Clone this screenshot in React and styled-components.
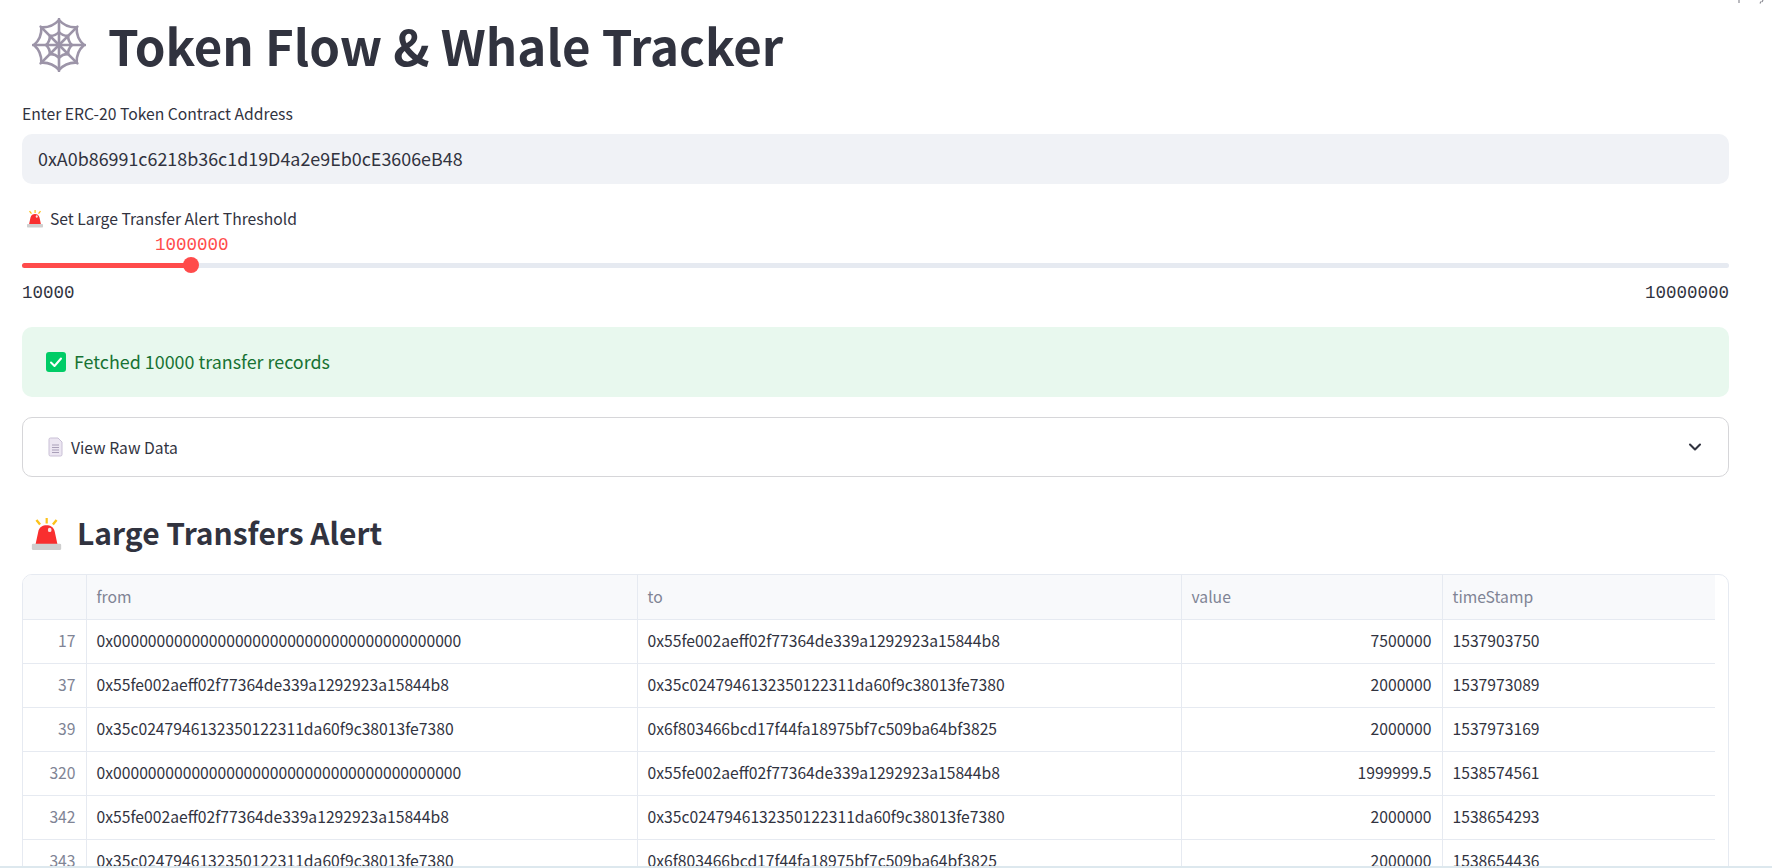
import React from 'react'
import styled, { createGlobalStyle } from 'styled-components'
import { ChevronDown } from 'lucide-react'

const GlobalStyle = createGlobalStyle`
  html, body {
    margin: 0;
    padding: 0;
    height: 868px;
    overflow: hidden;
    background: #fff;
  }
  body {
    font-family: "Noto Sans CJK SC", "Noto Sans", sans-serif;
    color: #31333f;
  }
`

const Page = styled.main`
  position: relative;
  height: 868px;
  overflow: hidden;
  padding: 0 43px 0 22px;
  box-sizing: border-box;
  display: flex;
  flex-direction: column;
  border-bottom: 2px solid #dde8ee;

  & > * {
    flex: none;
  }
`

// bottom edge of the toolbar text that hangs in from above the window
const ClippedToolbar = styled.svg`
  position: absolute;
  top: 0;
  right: 0;
`

const Title = styled.h1`
  display: flex;
  align-items: center;
  gap: 22px;
  margin: 12px 0 0 10px;
  height: 66px;
  font-size: 49.200px;
  font-weight: 700;
  line-height: 66px;
  white-space: nowrap;
`

const FieldLabel = styled.label`
  display: flex;
  align-items: center;
  gap: 6px;
  font-size: 15.700px;
  line-height: 24px;
  height: 24px;
  margin-top: ${props => props.$top || 0}px;
  padding-left: ${props => props.$indent || 0}px;
`

const TokenInput = styled.div`
  height: 50px;
  margin-top: 8px;
  padding: 0 16px 2px;
  box-sizing: border-box;
  display: flex;
  align-items: center;
  background: #f0f2f6;
  border-radius: 10px;
  font-size: 17.900px;
`

const SliderBlock = styled.section`
  margin-top: 23px;
`

const SliderValue = styled.div`
  margin-top: 2px;
  padding-left: 133px;
  font-family: "Liberation Mono", monospace;
  font-size: 17.500px;
  line-height: 24px;
  color: #ff4b4b;
`

const Track = styled.div`
  position: relative;
  height: 5px;
  margin-top: 6px;
  background: #e6eaf1;
  border-radius: 3px;
`

const TrackFill = styled.div`
  height: 100%;
  background: #ff4b4b;
  border-radius: 3px;
`

const Thumb = styled.div`
  position: absolute;
  top: -6px;
  width: 16px;
  height: 16px;
  margin-left: -8px;
  background: #ff4b4b;
  border-radius: 50%;
`

const SliderRange = styled.div`
  display: flex;
  justify-content: space-between;
  margin-top: 13px;
  font-family: "Liberation Mono", monospace;
  font-size: 17.500px;
  line-height: 24px;
`

const SuccessBox = styled.div`
  height: 70px;
  margin-top: 22px;
  padding: 0 24px 2px;
  box-sizing: border-box;
  display: flex;
  align-items: center;
  gap: 8px;
  background: #e8f8ee;
  border-radius: 10px;
  color: #177233;
  font-size: 17.900px;
`

const CheckMark = styled.span`
  width: 20px;
  height: 20px;
  margin-top: 1px;
  display: flex;
  align-items: center;
  justify-content: center;
  background: #00cc66;
  border-radius: 3px;
`

const Expander = styled.div`
  height: 60px;
  margin-top: 20px;
  box-sizing: border-box;
  padding: 0 23px 0 25px;
  display: flex;
  align-items: center;
  gap: 8px;
  border: 1px solid #d6d6d9;
  border-radius: 10px;
  font-size: 15.700px;
`

const ExpanderLabel = styled.span`
  flex: 1;
`

const SectionTitle = styled.h2`
  display: flex;
  align-items: center;
  gap: 14px;
  margin: 32px 0 0 8px;
  height: 46px;
  font-size: 30px;
  font-weight: 600;
  line-height: 46px;

  & svg {
    margin-top: 4px;
  }
`

const TableFrame = styled.div`
  margin-top: 19px;
  padding-right: 13px;
  border: 1px solid #e6eaf1;
  border-radius: 10px;
  overflow: hidden;
`

const Grid = styled.table`
  width: 100%;
  table-layout: fixed;
  border-collapse: collapse;
  font-size: 15.700px;
`

const HeadCell = styled.th`
  height: 44px;
  padding: 0 10px 1px;
  box-sizing: border-box;
  background: #f8f9fb;
  border-bottom: 1px solid #e6eaf1;
  border-right: 1px solid #e6eaf1;
  color: #808495;
  font-weight: 400;
  text-align: left;
  &:last-child { border-right: none; }
`

const Cell = styled.td`
  height: 44px;
  padding: 0 10px 2px;
  box-sizing: border-box;
  border-bottom: 1px solid #e6eaf1;
  border-right: 1px solid #e6eaf1;
  text-align: ${props => (props.$numeric ? 'right' : 'left')};
  color: ${props => (props.$muted ? '#808495' : '#31333f')};
  white-space: nowrap;
  &:last-child { border-right: none; }
`

const ZERO = '0x0000000000000000000000000000000000000000'
const DEPLOYER = '0x55fe002aeff02f77364de339a1292923a15844b8'
const MIDDLE = '0x35c0247946132350122311da60f9c38013fe7380'
const RECEIVER = '0x6f803466bcd17f44fa18975bf7c509ba64bf3825'

const transfers = [
  { id: 17, from: ZERO, to: DEPLOYER, value: '7500000', timeStamp: '1537903750' },
  { id: 37, from: DEPLOYER, to: MIDDLE, value: '2000000', timeStamp: '1537973089' },
  { id: 39, from: MIDDLE, to: RECEIVER, value: '2000000', timeStamp: '1537973169' },
  { id: 320, from: ZERO, to: DEPLOYER, value: '1999999.5', timeStamp: '1538574561' },
  { id: 342, from: DEPLOYER, to: MIDDLE, value: '2000000', timeStamp: '1538654293' },
  { id: 343, from: MIDDLE, to: RECEIVER, value: '2000000', timeStamp: '1538654436' },
]

const WebIcon = () => {
  const spokes = Array.from({ length: 8 }, (_, i) => (i * Math.PI) / 4)
  const ring = r => {
    const pts = spokes.map(a => [27 + r * Math.sin(a), 27 - r * Math.cos(a)])
    return pts.map((p, i) => {
      const next = pts[(i + 1) % 8]
      const mid = spokes[i] + Math.PI / 8
      const q = r * 0.74
      return `${i === 0 ? `M${p[0]} ${p[1]}` : ''}Q${27 + q * Math.sin(mid)} ${27 - q * Math.cos(mid)} ${next[0]} ${next[1]}`
    }).join('')
  }
  return (
    <svg width="54" height="54" viewBox="0 0 54 54" fill="none" stroke="#9c94a8" strokeWidth="2.600" strokeLinecap="round">
      {spokes.map(a => (
        <line key={a} x1="27" y1="27" x2={27 + 26 * Math.sin(a)} y2={27 - 26 * Math.cos(a)} />
      ))}
      <path d={ring(25)} />
      <path d={ring(13)} />
    </svg>
  )
}

const AlertIcon = ({ size }) => (
  <svg width={size} height={size} viewBox="0 0 36 36">
    <path d="M17 0h2.400v6H17zM6 3l2-1.600 4 5-2 1.600zM30 3l-2-1.600-4 5 2 1.600z" fill="#fcc21b" />
    <path d="M6 29 9 15C10 10 14 8 18 8s8 2 9 7l3 14z" fill="#f92f2f" />
    <ellipse cx="21.500" cy="13" rx="2" ry="2.400" fill="#fbe3e3" />
    <rect x="2" y="28" width="32" height="7" rx="1.500" fill="#cfcfcf" />
  </svg>
)

const PageIcon = () => (
  <svg width="15" height="20" viewBox="0 0 15 20" fill="#ece6f2" stroke="#c9c0d6" strokeWidth="1">
    <path d="M1 2.500A1.500 1.500 0 0 1 2.500 1H10l4 4v12.500a1.500 1.500 0 0 1-1.500 1.500h-10A1.500 1.500 0 0 1 1 17.500z" />
    <path d="M4 8h7M4 10.500h7M4 13h7M4 15.500h7" fill="none" stroke="#a99fb8" />
  </svg>
)

const App = () => (
  <>
    <GlobalStyle />
    <Page>
      <ClippedToolbar width="36" height="4" viewBox="0 0 36 4" fill="none" stroke="#8c8c94" strokeWidth="1.200">
        <path d="M3 0v3M25 1.500 24 3.500M27 0l-1 2" />
      </ClippedToolbar>

      <Title><WebIcon />Token Flow &amp; Whale Tracker</Title>

      <FieldLabel $top={24}>Enter ERC-20 Token Contract Address</FieldLabel>
      <TokenInput>0xA0b86991c6218b36c1d19D4a2e9Eb0cE3606eB48</TokenInput>

      <SliderBlock>
        <FieldLabel $indent={4}><AlertIcon size={18} />Set Large Transfer Alert Threshold</FieldLabel>
        <SliderValue>1000000</SliderValue>
        <Track>
          <TrackFill style={{ width: '9.900%' }} />
          <Thumb style={{ left: '9.900%' }} />
        </Track>
        <SliderRange><span>10000</span><span>10000000</span></SliderRange>
      </SliderBlock>

      <SuccessBox>
        <CheckMark>
          <svg width="14" height="14" viewBox="0 0 14 14" fill="none" stroke="#fff" strokeWidth="2" strokeLinecap="round" strokeLinejoin="round">
            <path d="M2 7.500 5.500 11 12 3.500" />
          </svg>
        </CheckMark>
        Fetched 10000 transfer records
      </SuccessBox>

      <Expander>
        <PageIcon />
        <ExpanderLabel>View Raw Data</ExpanderLabel>
        <ChevronDown size={20} strokeWidth={2.500} />
      </Expander>

      <SectionTitle><AlertIcon size={33} />Large Transfers Alert</SectionTitle>

      <TableFrame>
        <Grid>
          <colgroup>
            <col style={{ width: 63 }} />
            <col style={{ width: 551 }} />
            <col style={{ width: 544 }} />
            <col style={{ width: 261 }} />
            <col />
          </colgroup>
          <thead>
            <tr>
              <HeadCell />
              <HeadCell>from</HeadCell>
              <HeadCell>to</HeadCell>
              <HeadCell>value</HeadCell>
              <HeadCell>timeStamp</HeadCell>
            </tr>
          </thead>
          <tbody>
            {transfers.map(row => (
              <tr key={row.id}>
                <Cell $numeric $muted>{row.id}</Cell>
                <Cell>{row.from}</Cell>
                <Cell>{row.to}</Cell>
                <Cell $numeric>{row.value}</Cell>
                <Cell>{row.timeStamp}</Cell>
              </tr>
            ))}
          </tbody>
        </Grid>
      </TableFrame>
    </Page>
  </>
)

export default App
